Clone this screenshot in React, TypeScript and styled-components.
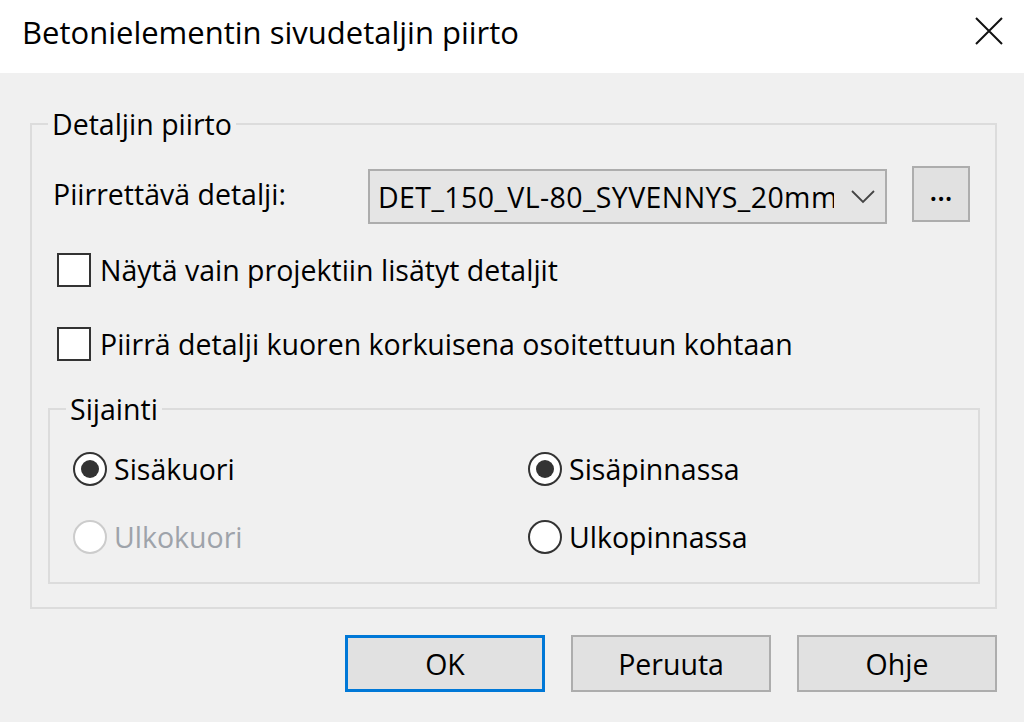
import React from "react";
import styled, { createGlobalStyle } from "styled-components";

const Global = createGlobalStyle`
  html, body { margin: 0; padding: 0; background: #f0f0f0; }
  body { font-family: "Open Sans", "Noto Sans", "Liberation Sans", sans-serif; color: #000; }
  * { box-sizing: border-box; }
`;

const Window = styled.div`
  width: 1024px;
  height: 722px;
  display: flex;
  flex-direction: column;
  background: #f0f0f0;
  overflow: hidden;
`;

const TitleBar = styled.div`
  height: 73px;
  flex: none;
  background: #ffffff;
  display: flex;
  align-items: center;
  justify-content: space-between;
  padding: 0 20px 0 22px;
`;

const Title = styled.div`
  font-size: 31px;
  margin-top: -9px;
  color: #000;
  white-space: nowrap;
`;

const CloseBtn = styled.div`
  width: 30px;
  height: 30px;
  display: flex;
  align-items: center;
  justify-content: center;
  margin-top: -11px;
`;

const Body = styled.div`
  flex: 1;
  display: flex;
  flex-direction: column;
  padding: 50px 27px 0 30px;
`;

const Group = styled.div<{ $pt: number; $px: number; $pb: number }>`
  position: relative;
  border: 2px solid #dcdcdc;
  padding: ${(p) => p.$pt}px ${(p) => p.$px}px ${(p) => p.$pb}px;
`;

const Legend = styled.span<{ $left: number }>`
  position: absolute;
  top: -20px;
  left: ${(p) => p.$left}px;
  padding: 0 4px;
  background: #f0f0f0;
  font-size: 28.5px;
  line-height: 38px;
  white-space: nowrap;
`;

const DetailRow = styled.div`
  display: grid;
  grid-template-columns: 1fr 519px 58px;
  column-gap: 25px;
  align-items: center;
  height: 58px;
  padding: 0 25px 0 21px;
`;

const Label = styled.span`
  font-size: 28.5px;
  white-space: nowrap;
`;

const Combo = styled.div`
  height: 55px;
  margin-top: 5px;
  background: #e5e5e5;
  border: 2px solid #adadad;
  display: flex;
  align-items: center;
  justify-content: space-between;
  padding: 0 10px 0 8px;
`;

const ComboText = styled.span`
  width: 456px;
  flex: none;
  font-size: 28.5px;
  letter-spacing: 0.4px;
  white-space: nowrap;
  overflow: hidden;
`;

const SmallButton = styled.div`
  height: 56px;
  background: #e1e1e1;
  border: 2px solid #adadad;
  display: flex;
  align-items: center;
  justify-content: center;
  font-size: 28px;
  font-weight: 600;
  padding-bottom: 8px;
`;

const CheckRow = styled.div<{ $mt: number }>`
  display: flex;
  align-items: center;
  gap: 9px;
  height: 34px;
  margin-top: ${(p) => p.$mt}px;
  padding-left: 25px;
`;

const Box = styled.div`
  width: 34px;
  height: 34px;
  background: #fff;
  border: 2px solid #333;
  flex: none;
`;

const OptText = styled.span<{ $disabled?: boolean }>`
  font-size: 28.5px;
  white-space: nowrap;
  color: ${(p) => (p.$disabled ? "#9ea3aa" : "#000")};
`;

const InnerWrap = styled.div`
  margin: 47px 15px 0 16px;
`;

const RadioGrid = styled.div`
  display: grid;
  grid-template-columns: 455px 1fr;
  row-gap: 34px;
`;

const RadioItem = styled.div`
  display: flex;
  align-items: center;
  gap: 7px;
  height: 34px;
`;

const Radio = styled.div<{ $checked?: boolean; $disabled?: boolean }>`
  width: 34px;
  height: 34px;
  border-radius: 50%;
  background: #fff;
  border: 2px solid ${(p) => (p.$disabled ? "#cccccc" : "#333")};
  flex: none;
  display: flex;
  align-items: center;
  justify-content: center;
  &::after {
    content: "";
    display: ${(p) => (p.$checked ? "block" : "none")};
    width: 18px;
    height: 18px;
    border-radius: 50%;
    background: #333;
  }
`;

const Footer = styled.div`
  display: flex;
  justify-content: flex-end;
  gap: 26px;
  margin-top: 26px;
`;

const DlgButton = styled.div<{ $default?: boolean }>`
  width: 200px;
  height: 57px;
  background: #e1e1e1;
  border: ${(p) => (p.$default ? "3px solid #0078d7" : "2px solid #adadad")};
  display: flex;
  align-items: center;
  justify-content: center;
  font-size: 28.5px;
`;

export default function App() {
  return (
    <Window>
      <Global />
      <TitleBar>
        <Title>Betonielementin sivudetaljin piirto</Title>
        <CloseBtn>
          <svg width="28" height="28" viewBox="0 0 28 28">
            <path d="M1 1 L27 27 M27 1 L1 27" stroke="#111" strokeWidth="2" fill="none" />
          </svg>
        </CloseBtn>
      </TitleBar>
      <Body>
        <Group $pt={39} $px={0} $pb={23}>
          <Legend $left={16}>Detaljin piirto</Legend>
          <DetailRow>
            <Label>Piirrettävä detalji:</Label>
            <Combo>
              <ComboText>DET_150_VL-80_SYVENNYS_20mm</ComboText>
              <svg width="24" height="14" viewBox="0 0 24 14">
                <path d="M1 1 L12 12 L23 1" stroke="#444" strokeWidth="1.8" fill="none" />
              </svg>
            </Combo>
            <SmallButton>...</SmallButton>
          </DetailRow>
          <CheckRow $mt={31}>
            <Box />
            <OptText>Näytä vain projektiin lisätyt detaljit</OptText>
          </CheckRow>
          <CheckRow $mt={40}>
            <Box />
            <OptText>Piirrä detalji kuoren korkuisena osoitettuun kohtaan</OptText>
          </CheckRow>
          <InnerWrap>
            <Group $pt={42} $px={23} $pb={28}>
              <Legend $left={16}>Sijainti</Legend>
              <RadioGrid>
                <RadioItem>
                  <Radio $checked />
                  <OptText>Sisäkuori</OptText>
                </RadioItem>
                <RadioItem>
                  <Radio $checked />
                  <OptText>Sisäpinnassa</OptText>
                </RadioItem>
                <RadioItem>
                  <Radio $disabled />
                  <OptText $disabled>Ulkokuori</OptText>
                </RadioItem>
                <RadioItem>
                  <Radio />
                  <OptText>Ulkopinnassa</OptText>
                </RadioItem>
              </RadioGrid>
            </Group>
          </InnerWrap>
        </Group>
        <Footer>
          <DlgButton $default>OK</DlgButton>
          <DlgButton>Peruuta</DlgButton>
          <DlgButton>Ohje</DlgButton>
        </Footer>
      </Body>
    </Window>
  );
}
